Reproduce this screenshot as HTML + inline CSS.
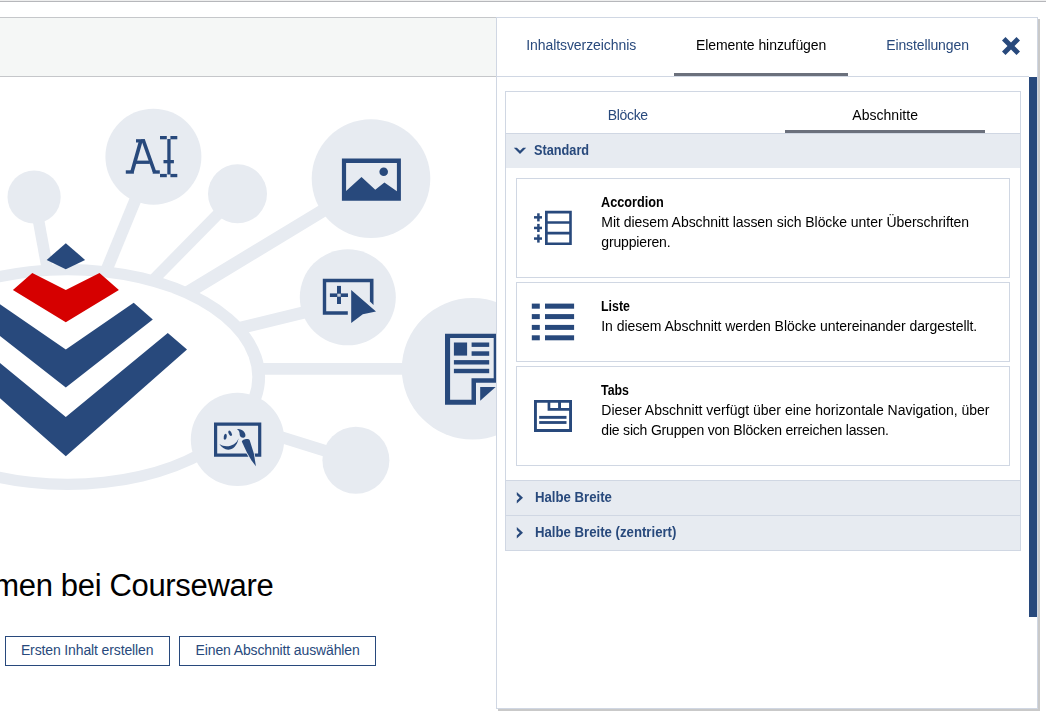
<!DOCTYPE html>
<html lang="de">
<head>
<meta charset="utf-8">
<title>Courseware</title>
<style>
html,body{margin:0;padding:0;}
body{width:1046px;height:719px;position:relative;overflow:hidden;background:#fff;
  font-family:"Liberation Sans",sans-serif;font-size:14px;color:#000;}
.abs{position:absolute;}
.t{position:absolute;white-space:nowrap;line-height:20px;font-size:14px;}
.blue{color:#28497c;}
.b{font-weight:bold;}
#topline0{left:0;top:0;width:1046px;height:1px;background:#eeeeee;}
#topline1{left:0;top:1px;width:1046px;height:1px;background:#b6b7bb;}
#band{left:0;top:17px;width:496px;height:58px;background:#f5f7f6;border-top:1px solid #c5c7ca;border-bottom:1px solid #c5c7ca;}
#panel{left:496px;top:17px;width:540px;height:690px;background:#fff;border:1px solid #d0d7e3;box-shadow:2px 2px 0 #c9c9c9;}
#phead-line{left:497px;top:76px;width:532px;height:1px;background:#d0d7e3;}
.uline{position:absolute;height:3px;background:#6b707c;}
#scroll{left:1029px;top:77px;width:8px;height:540px;background:#28497c;}
#inner{left:505px;top:91px;width:514px;height:458px;border:1px solid #d0d7e3;background:#fff;}
.sech{position:absolute;left:506px;width:514px;height:34px;background:#e7ebf1;border-top:1px solid #d0d7e3;}
.item{position:absolute;left:516px;width:492px;border:1px solid #d0d7e3;background:#fff;}
.btn{position:absolute;top:636px;height:28px;border:1px solid #28497c;background:#fff;}
</style>
</head>
<body>
<div class="abs" id="topline0"></div>
<div class="abs" id="topline1"></div>

<!-- illustration -->
<svg class="abs" id="illu" style="left:0;top:77px" width="496" height="642" viewBox="0 77 496 642">
  <g stroke="#e7ebf1" fill="none">
    <line x1="65.8" y1="369" x2="34.2" y2="197" stroke-width="11.6"/>
    <line x1="65.8" y1="369" x2="153" y2="157" stroke-width="12"/>
    <line x1="65.8" y1="369" x2="237.5" y2="194.2" stroke-width="11.3"/>
    <line x1="65.8" y1="366.4" x2="371" y2="181.5" stroke-width="13.1"/>
    <line x1="65.8" y1="370.3" x2="347.8" y2="301.8" stroke-width="12.3"/>
    <line x1="65.8" y1="368.8" x2="472.6" y2="368.8" stroke-width="11.7"/>
    <line x1="65.8" y1="370" x2="355.9" y2="460.4" stroke-width="11.8"/>
  </g>
  <ellipse cx="67.5" cy="377" rx="197.6" ry="113" fill="#e7ebf1"/>
  <ellipse cx="67.5" cy="377" rx="184.8" ry="101.8" fill="#fff"/>
  <g fill="#e7ebf1">
    <circle cx="34.1" cy="197" r="26.6"/>
    <circle cx="153.4" cy="156.7" r="48"/>
    <circle cx="237.5" cy="193.8" r="29.5"/>
    <circle cx="371" cy="178.6" r="59.3"/>
    <circle cx="347.8" cy="297.3" r="48"/>
    <circle cx="472.6" cy="368.8" r="70.8"/>
    <circle cx="237.5" cy="439.4" r="46.7"/>
    <circle cx="355.9" cy="460.3" r="33.5"/>
  </g>
  <!-- logo -->
  <g fill="#28497c">
    <polygon points="65.8,243.2 85.1,259.9 65.8,269.3 46.7,259.9"/>
    <polygon points="133.7,302.7 152.8,319.4 65.8,387.4 -21.2,319.4 -2.1,302.7 65.8,349.4"/>
    <polygon points="167.8,333.1 187,349.4 65.8,456.2 -55.4,349.4 -36.2,333.1 65.8,417.1"/>
  </g>
  <polygon fill="#d60000" points="12.9,290.1 32.3,273.1 65.8,290.1 99.5,273.1 118.9,290.1 65.8,322.3"/>
  <!-- AI text icon -->
  <g fill="#28497c">
    <rect x="136" y="139.2" width="8.8" height="3.3"/>
    <polygon points="138.6,142 142.4,142 133.9,172 130.1,172"/>
    <polygon points="141,139.2 144.8,139.2 156.4,172 152.6,172"/>
    <rect x="135.6" y="160.6" width="14.2" height="3.3"/>
    <rect x="125.8" y="170.3" width="8.1" height="3.4"/>
    <rect x="152.7" y="170.3" width="7.1" height="3.4"/>
    <rect x="167.3" y="139" width="3.3" height="35.5"/>
    <rect x="160" y="136" width="6.8" height="3.3"/>
    <rect x="170.4" y="136" width="6.9" height="3.3"/>
    <rect x="160" y="173.9" width="6.8" height="3.3"/>
    <rect x="170.4" y="173.9" width="6.9" height="3.3"/>
    <rect x="163.5" y="160" width="10.4" height="3.3"/>
  </g>
  <!-- image icon -->
  <path fill="#28497c" fill-rule="evenodd" d="M341.9 158.6H400.9V200.8H341.9Z M346.1 162.9V191.1L361.5 177.1L375.25 189.8L384.4 182.5L396.9 191.25V162.9Z"/>
  <circle cx="383.7" cy="171.7" r="4.3" fill="#28497c"/>
  <!-- add/cursor icon -->
  <g fill="#28497c">
    <path d="M322.8 278.8H373.5V304.9L369.9 301.6V282.3H326.2V311.3H347.8V314.8H322.8Z"/>
    <rect x="337" y="285.9" width="4" height="18.1"/>
    <rect x="329.9" y="293.4" width="18.1" height="3.6"/>
    <rect x="337.3" y="293.7" width="3.4" height="3" fill="#e7ebf1" opacity="0.85"/>
    <polygon points="351.2,290.1 376,311.5 362.8,314.25 351.2,323" stroke="#e7ebf1" stroke-width="2.4" paint-order="stroke"/>
  </g>
  <!-- document icon -->
  <g fill="#28497c">
    <path fill-rule="evenodd" d="M445 333.8H498.5V382.8H476V404.7H445Z M450.1 338V399.8H471.5V378.2H493.7V338Z"/>
    <polygon points="480.2,387 495.6,387 480.2,400.7"/>
    <rect x="453.9" y="342.5" width="13.2" height="13.1"/>
    <rect x="471.6" y="342.5" width="17.6" height="4.4"/>
    <rect x="471.6" y="351.3" width="17.6" height="4.5"/>
    <rect x="453.9" y="360.1" width="35.3" height="4.4"/>
    <rect x="453.9" y="368.8" width="35.3" height="4.4"/>
  </g>
  <!-- paint icon -->
  <g fill="#28497c">
    <path fill-rule="evenodd" d="M214 422.4H261.3V456.8H214Z M217.2 425.8V453.4H258.1V425.8Z"/>
    <ellipse cx="225.25" cy="436.75" rx="1.5" ry="3" transform="rotate(10 225.25 436.75)"/>
    <ellipse cx="230.1" cy="433.25" rx="1.4" ry="2.9" transform="rotate(-28 230.1 433.25)"/>
    <path d="M219.4 444.1C224 452.3 236 452.3 238.6 438.25C236 446 226 448.6 219.4 444.1Z"/>
    <path d="M236.9 429.1C242 428.3 246.5 433 245.3 436.6C243.5 439 240 437.5 239.7 435C239.6 432.5 239.3 430.5 236.9 429.1Z"/>
    <path d="M241.9 441.8C241.5 439.6 248.6 437.6 249.8 440.4L253.9 453.7L255.9 466.2L251.4 460.2L246.9 452.6Z" stroke="#e7ebf1" stroke-width="1.6" paint-order="stroke"/>
  </g>
</svg>

<div class="abs" id="band"></div>

<!-- heading + buttons -->
<div class="t" id="h1" style="right:772.7px;top:563.7px;font-size:31px;line-height:44px;letter-spacing:-0.33px;color:#000;">Willkommen bei Courseware</div>
<div class="btn" style="left:5px;width:163px;"></div>
<div class="btn" style="left:179px;width:195px;"></div>
<div class="t blue" style="left:20.9px;top:640px;letter-spacing:-0.126px;">Ersten Inhalt erstellen</div>
<div class="t blue" style="left:195.6px;top:640px;letter-spacing:-0.134px;">Einen Abschnitt auswählen</div>

<!-- panel -->
<div id="pwrap" style="position:absolute;left:0;top:0;width:1046px;height:719px;will-change:transform;">
<div class="abs" id="panel"></div>
<div class="abs" id="phead-line"></div>
<div class="t blue" style="left:526.2px;top:35px;letter-spacing:-0.075px;">Inhaltsverzeichnis</div>
<div class="t" style="left:695.9px;top:35px;letter-spacing:-0.06px;">Elemente hinzufügen</div>
<div class="t blue" style="left:886.2px;top:35px;letter-spacing:-0.11px;">Einstellungen</div>
<div class="uline" style="left:674px;top:73px;width:174px;"></div>
<svg class="abs" style="left:1002px;top:37px" width="18" height="18" viewBox="0 0 18 18"><path d="M3.5 0 L9 5.5 L14.5 0 L18 3.5 L12.5 9 L18 14.5 L14.5 18 L9 12.5 L3.5 18 L0 14.5 L5.5 9 L0 3.5 Z" fill="#28497c"/></svg>
<div class="abs" id="scroll"></div>

<div class="abs" id="inner"></div>
<div class="t blue" style="left:607.8px;top:105px;letter-spacing:-0.339px;">Blöcke</div>
<div class="t" style="left:852.3px;top:105px;letter-spacing:0.033px;">Abschnitte</div>
<div class="uline" style="left:785px;top:130px;width:200px;"></div>

<div class="sech" style="top:133px;"></div>
<div class="t blue b" style="left:534.2px;top:140px;transform:scaleX(0.908);transform-origin:0 50%;">Standard</div>

<div class="item" style="top:178px;height:98px;"></div>
<div class="item" style="top:282px;height:78px;"></div>
<div class="item" style="top:366px;height:98px;"></div>

<div class="t b" style="left:601.3px;top:192px;transform:scaleX(0.906);transform-origin:0 50%;">Accordion</div>
<div class="t" style="left:601.3px;top:212px;letter-spacing:-0.044px;">Mit diesem Abschnitt lassen sich Blöcke unter Überschriften</div>
<div class="t" style="left:601.3px;top:232px;letter-spacing:-0.155px;">gruppieren.</div>

<div class="t b" style="left:601.3px;top:296px;transform:scaleX(0.884);transform-origin:0 50%;">Liste</div>
<div class="t" style="left:601.3px;top:316px;letter-spacing:-0.066px;">In diesem Abschnitt werden Blöcke untereinander dargestellt.</div>

<div class="t b" style="left:601.3px;top:380px;transform:scaleX(0.882);transform-origin:0 50%;">Tabs</div>
<div class="t" style="left:601.3px;top:400px;letter-spacing:-0.002px;">Dieser Abschnitt verfügt über eine horizontale Navigation, über</div>
<div class="t" style="left:601.3px;top:420px;letter-spacing:-0.196px;">die sich Gruppen von Blöcken erreichen lassen.</div>

<div class="sech" style="top:480px;"></div>
<div class="sech" style="top:515px;"></div>
<div class="t blue b" style="left:534.6px;top:487px;transform:scaleX(0.9412);transform-origin:0 50%;">Halbe Breite</div>
<div class="t blue b" style="left:534.6px;top:522px;transform:scaleX(0.9417);transform-origin:0 50%;">Halbe Breite (zentriert)</div>
</div>
<svg class="abs" id="picons" style="left:496px;top:77px;pointer-events:none" width="550" height="642" viewBox="496 77 550 642">
  <g fill="#28497c">
    <!-- chevrons -->
    <polygon points="513.8,147.7 516.9,147.7 520,150.8 523.1,147.7 526.2,147.7 520,154"/>
    <polygon points="516.8,491.9 523,497.75 516.8,503.6 516.8,500.5 519.7,497.75 516.8,495"/>
    <polygon points="516.8,526.9 523,532.75 516.8,538.6 516.8,535.5 519.7,532.75 516.8,530"/>
    <!-- accordion icon -->
    <path fill-rule="evenodd" d="M545 210.8H571.8V245H545Z M547.7 213.5V221.2H569.2V213.5Z M547.7 223.8V231.8H569.2V223.8Z M547.7 234.5V242.4H569.2V234.5Z"/>
    <rect x="534" y="216.1" width="8" height="2.5"/><rect x="537.15" y="213.3" width="2.5" height="8.1"/>
    <rect x="534" y="226.7" width="8" height="2.5"/><rect x="537.15" y="223.9" width="2.5" height="8.1"/>
    <rect x="534" y="237.3" width="8" height="2.5"/><rect x="537.15" y="234.5" width="2.5" height="8.1"/>
    <!-- list icon -->
    <rect x="531.8" y="303.6" width="8" height="5.1"/><rect x="545" y="303.6" width="29.1" height="5.1"/>
    <rect x="531.8" y="314.1" width="8" height="5"/><rect x="545" y="314.1" width="29.1" height="5"/>
    <rect x="531.8" y="324.9" width="8" height="5"/><rect x="545" y="324.9" width="29.1" height="5"/>
    <rect x="531.8" y="335.3" width="8" height="5"/><rect x="545" y="335.3" width="29.1" height="5"/>
    <!-- tabs icon -->
    <path fill-rule="evenodd" d="M534 399.9H572V432H534Z M536.9 402.8V429.1H569.1V410.8H547.6V402.8Z M550.3 402.8V408.1H558.1V402.8Z M561 402.8V408.1H569.1V402.8Z"/>
    <rect x="539.2" y="415.9" width="27.3" height="2.9"/>
    <rect x="539.2" y="421.1" width="27.3" height="2.8"/>
  </g>
</svg>

</body>
</html>
